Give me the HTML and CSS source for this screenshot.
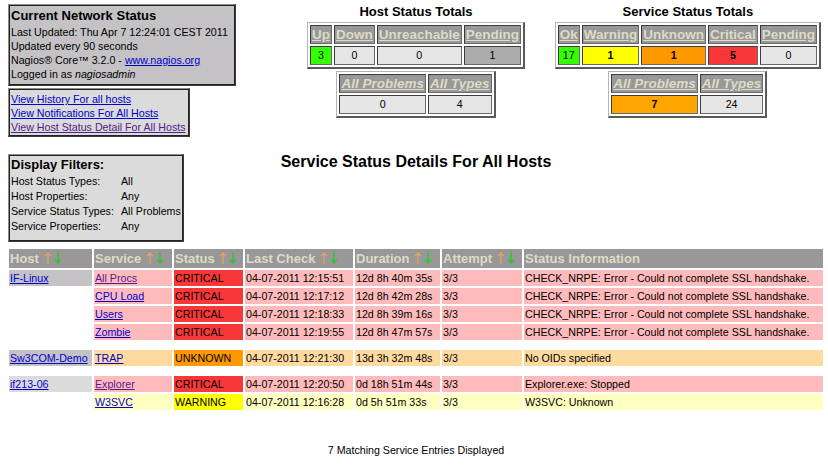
FILE: index.html
```html
<!DOCTYPE html>
<html>
<head>
<meta charset="utf-8">
<title>Current Network Status</title>
<link rel="stylesheet" href="styles.css">
</head>
<body>
<div class="top">
  <div class="left">
    <div class="infobox">
      <div class="boxtitle">Current Network Status</div>
      <div class="line">Last Updated: Thu Apr 7 12:24:01 CEST 2011</div>
      <div class="line">Updated every 90 seconds</div>
      <div class="line">Nagios® Core™ 3.2.0 - <a href="#">www.nagios.org</a></div>
      <div class="line">Logged in as <i>nagiosadmin</i></div>
    </div>
    <div class="linkbox">
      <div class="line"><a href="#">View History For all hosts</a></div>
      <div class="line"><a href="#">View Notifications For All Hosts</a></div>
      <div class="line"><a href="#" class="visited">View Host Status Detail For All Hosts</a></div>
    </div>
  </div>

  <div class="totals host-totals">
    <div class="tot-title">Host Status Totals</div>
    <table class="tot">
      <tr><th><a href="#">Up</a></th><th><a href="#">Down</a></th><th><a href="#">Unreachable</a></th><th><a href="#">Pending</a></th></tr>
      <tr><td class="v-up">3</td><td>0</td><td>0</td><td class="v-hpend">1</td></tr>
    </table>
    <table class="tot tot2">
      <tr><th><a href="#"><i>All Problems</i></a></th><th><a href="#"><i>All Types</i></a></th></tr>
      <tr><td>0</td><td>4</td></tr>
    </table>
  </div>

  <div class="totals svc-totals">
    <div class="tot-title">Service Status Totals</div>
    <table class="tot">
      <tr><th><a href="#">Ok</a></th><th><a href="#">Warning</a></th><th><a href="#">Unknown</a></th><th><a href="#">Critical</a></th><th><a href="#">Pending</a></th></tr>
      <tr><td class="v-up">17</td><td class="v-warn">1</td><td class="v-unk">1</td><td class="v-crit">5</td><td>0</td></tr>
    </table>
    <table class="tot tot2">
      <tr><th><a href="#"><i>All Problems</i></a></th><th><a href="#"><i>All Types</i></a></th></tr>
      <tr><td class="v-probs">7</td><td>24</td></tr>
    </table>
  </div>
</div>

<div class="mid">
  <div class="filters">
    <div class="boxtitle">Display Filters:</div>
    <div class="frow"><span>Host Status Types:</span><span>All</span></div>
    <div class="frow"><span>Host Properties:</span><span>Any</span></div>
    <div class="frow"><span>Service Status Types:</span><span>All Problems</span></div>
    <div class="frow"><span>Service Properties:</span><span>Any</span></div>
  </div>
  <div class="page-title">Service Status Details For All Hosts</div>
  <div></div>
</div>

<table class="status">
  <colgroup>
    <col class="c-host"><col class="c-svc"><col class="c-stat"><col class="c-last"><col class="c-dur"><col class="c-att"><col class="c-info">
  </colgroup>
  <tr>
    <th>Host <svg class="up" viewBox="0 0 8 12"><path d="M4 1.2V12M1 4.2L4 1.2L7 4.2"/></svg><svg class="down" viewBox="0 0 8 12"><path d="M4 0V10.8M1 7.8L4 10.8L7 7.8"/></svg></th>
    <th>Service <svg class="up" viewBox="0 0 8 12"><path d="M4 1.2V12M1 4.2L4 1.2L7 4.2"/></svg><svg class="down" viewBox="0 0 8 12"><path d="M4 0V10.8M1 7.8L4 10.8L7 7.8"/></svg></th>
    <th>Status <svg class="up" viewBox="0 0 8 12"><path d="M4 1.2V12M1 4.2L4 1.2L7 4.2"/></svg><svg class="down" viewBox="0 0 8 12"><path d="M4 0V10.8M1 7.8L4 10.8L7 7.8"/></svg></th>
    <th>Last Check <svg class="up" viewBox="0 0 8 12"><path d="M4 1.2V12M1 4.2L4 1.2L7 4.2"/></svg><svg class="down" viewBox="0 0 8 12"><path d="M4 0V10.8M1 7.8L4 10.8L7 7.8"/></svg></th>
    <th>Duration <svg class="up" viewBox="0 0 8 12"><path d="M4 1.2V12M1 4.2L4 1.2L7 4.2"/></svg><svg class="down" viewBox="0 0 8 12"><path d="M4 0V10.8M1 7.8L4 10.8L7 7.8"/></svg></th>
    <th>Attempt <svg class="up" viewBox="0 0 8 12"><path d="M4 1.2V12M1 4.2L4 1.2L7 4.2"/></svg><svg class="down" viewBox="0 0 8 12"><path d="M4 0V10.8M1 7.8L4 10.8L7 7.8"/></svg></th>
    <th>Status Information</th>
  </tr>
  <tr>
    <td class="host-odd"><a href="#">IF-Linux</a></td>
    <td class="bg-crit"><a href="#" class="visited">All Procs</a></td>
    <td class="s-crit">CRITICAL</td>
    <td class="bg-crit">04-07-2011 12:15:51</td>
    <td class="bg-crit">12d 8h 40m 35s</td>
    <td class="bg-crit">3/3</td>
    <td class="bg-crit">CHECK_NRPE: Error - Could not complete SSL handshake.</td>
  </tr>
  <tr>
    <td></td>
    <td class="bg-crit"><a href="#">CPU Load</a></td>
    <td class="s-crit">CRITICAL</td>
    <td class="bg-crit">04-07-2011 12:17:12</td>
    <td class="bg-crit">12d 8h 42m 28s</td>
    <td class="bg-crit">3/3</td>
    <td class="bg-crit">CHECK_NRPE: Error - Could not complete SSL handshake.</td>
  </tr>
  <tr>
    <td></td>
    <td class="bg-crit"><a href="#">Users</a></td>
    <td class="s-crit">CRITICAL</td>
    <td class="bg-crit">04-07-2011 12:18:33</td>
    <td class="bg-crit">12d 8h 39m 16s</td>
    <td class="bg-crit">3/3</td>
    <td class="bg-crit">CHECK_NRPE: Error - Could not complete SSL handshake.</td>
  </tr>
  <tr>
    <td></td>
    <td class="bg-crit"><a href="#">Zombie</a></td>
    <td class="s-crit">CRITICAL</td>
    <td class="bg-crit">04-07-2011 12:19:55</td>
    <td class="bg-crit">12d 8h 47m 57s</td>
    <td class="bg-crit">3/3</td>
    <td class="bg-crit">CHECK_NRPE: Error - Could not complete SSL handshake.</td>
  </tr>
  <tr class="sep"><td colspan="7"></td></tr>
  <tr>
    <td class="host-odd"><a href="#">Sw3COM-Demo</a></td>
    <td class="bg-unk"><a href="#">TRAP</a></td>
    <td class="s-unk">UNKNOWN</td>
    <td class="bg-unk">04-07-2011 12:21:30</td>
    <td class="bg-unk">13d 3h 32m 48s</td>
    <td class="bg-unk">3/3</td>
    <td class="bg-unk">No OIDs specified</td>
  </tr>
  <tr class="sep"><td colspan="7"></td></tr>
  <tr>
    <td class="host-even"><a href="#">if213-06</a></td>
    <td class="bg-crit"><a href="#" class="visited">Explorer</a></td>
    <td class="s-crit">CRITICAL</td>
    <td class="bg-crit">04-07-2011 12:20:50</td>
    <td class="bg-crit">0d 18h 51m 44s</td>
    <td class="bg-crit">3/3</td>
    <td class="bg-crit">Explorer.exe: Stopped</td>
  </tr>
  <tr>
    <td></td>
    <td class="bg-warn"><a href="#">W3SVC</a></td>
    <td class="s-warn">WARNING</td>
    <td class="bg-warn">04-07-2011 12:16:28</td>
    <td class="bg-warn">0d 5h 51m 33s</td>
    <td class="bg-warn">3/3</td>
    <td class="bg-warn">W3SVC: Unknown</td>
  </tr>
</table>

<div class="footer">7 Matching Service Entries Displayed</div>
</body>
</html>
```

FILE: styles.css
```css
html {
  overflow: hidden;
}

body {
  margin: 4px 4px 0 8px;
  font-family: "Liberation Sans", Arial, sans-serif;
  color: #000;
  background: #fff;
}

a {
  color: #0000cc;
  text-decoration: underline;
}

a.visited {
  color: #551a8b;
}

.top {
  display: grid;
  grid-template-columns: 1fr auto 1fr;
  align-items: start;
}

.left {
  display: flex;
  flex-direction: column;
  align-items: flex-start;
}

.infobox,
.linkbox,
.filters {
  box-sizing: border-box;
  border-style: solid;
  border-width: 1px 2px 2px 1px;
  border-color: #8c8c8c #3c3c3c #3c3c3c #8c8c8c;
  outline: 1px solid #222;
  outline-offset: -2px;
  font-size: 10.67px;
}

.infobox {
  width: 228px;
  background: #c4c2c4;
  padding: 1px 2px 3px 2px;
}

.linkbox {
  width: 182px;
  background: #dbdbdb;
  padding: 3px 2px 1px 2px;
  margin-top: 2px;
}

.boxtitle {
  font-size: 13px;
  font-weight: bold;
  line-height: 19px;
}

.line {
  line-height: 14px;
  white-space: nowrap;
}

/* Totals */
.totals {
  display: flex;
  flex-direction: column;
  align-items: center;
}

.svc-totals {
  justify-self: end;
  margin-right: 3px;
}

.tot-title {
  font-size: 13px;
  font-weight: bold;
  line-height: 16px;
  margin-bottom: 2px;
}

table.tot {
  border-collapse: separate;
  border-spacing: 2px;
  border-style: solid;
  border-width: 1px 2px 2px 1px;
  border-color: #b4b4b4 #5a5a5a #5a5a5a #b4b4b4;
}

table.tot2 {
  margin-top: 2px;
}

.tot th {
  background: #999797;
  border: 1px solid;
  border-color: #3c3c3c #6a6a6a #6a6a6a #3c3c3c;
  padding: 0 1px;
  font-size: 13.5px;
  font-weight: bold;
  line-height: 17px;
  white-space: nowrap;
}

.tot th a {
  color: #dcdcc6;
}

.tot td {
  background: #e6e6e6;
  border: 1px solid;
  border-color: #3c3c3c #6a6a6a #6a6a6a #3c3c3c;
  padding: 0;
  font-size: 10.67px;
  line-height: 17px;
  text-align: center;
}

.tot td.v-up { background: #33ff00; }
.tot td.v-hpend { background: #acacac; }
.tot td.v-warn { background: #ffff00; font-weight: bold; }
.tot td.v-unk { background: #ff9900; font-weight: bold; }
.tot td.v-crit { background: #f83838; font-weight: bold; }
.tot td.v-probs { background: #ffa500; font-weight: bold; }

/* Filters + title */
.mid {
  display: grid;
  grid-template-columns: 1fr auto 1fr;
  align-items: start;
  margin-top: 17px;
}

.filters {
  width: 176px;
  background: #dbdbdb;
  padding: 0 2px 6px 2px;
}

.frow {
  display: grid;
  grid-template-columns: 110px auto;
  line-height: 15px;
  white-space: nowrap;
}

.page-title {
  font-size: 16px;
  font-weight: bold;
  line-height: 16px;
  white-space: nowrap;
}

/* Status table */
table.status {
  border-collapse: separate;
  border-spacing: 2px;
  table-layout: fixed;
  width: 818px;
  margin: 5px 0 0 -1px;
  font-size: 10.67px;
}

.c-host { width: 83px; }
.c-svc { width: 78px; }
.c-stat { width: 69px; }
.c-last { width: 108px; }
.c-dur { width: 85px; }
.c-att { width: 80px; }
.c-info { width: 299px; }

.status th {
  background: #999797;
  color: #dcdcc6;
  font-size: 13px;
  font-weight: bold;
  text-align: left;
  line-height: 19px;
  height: 19px;
  padding: 0 1px;
  white-space: nowrap;
  overflow: hidden;
}

.status th svg {
  width: 8px;
  height: 12px;
  vertical-align: -1px;
  fill: none;
}

.status th svg.up {
  margin-left: 1px;
  stroke: #eba55a;
  stroke-width: 1.2;
}

.status th svg.down {
  margin-left: 2px;
  stroke: #36c236;
  stroke-width: 1.6;
}

.status td {
  padding: 0 1px;
  line-height: 16px;
  height: 16px;
  white-space: nowrap;
  overflow: hidden;
}

.status tr.sep td {
  height: 6px;
  line-height: 0;
  padding: 0;
}

.host-odd { background: #c4c2c4; }
.host-even { background: #dbdbdb; }
.bg-crit { background: #ffbbbb; }
.bg-unk { background: #ffda9f; }
.bg-warn { background: #feffc1; }
.s-crit { background: #f83838; }
.s-unk { background: #ff9900; }
.s-warn { background: #ffff00; }

.footer {
  text-align: center;
  font-size: 10.67px;
  line-height: 14px;
  margin-top: 31px;
}
```
